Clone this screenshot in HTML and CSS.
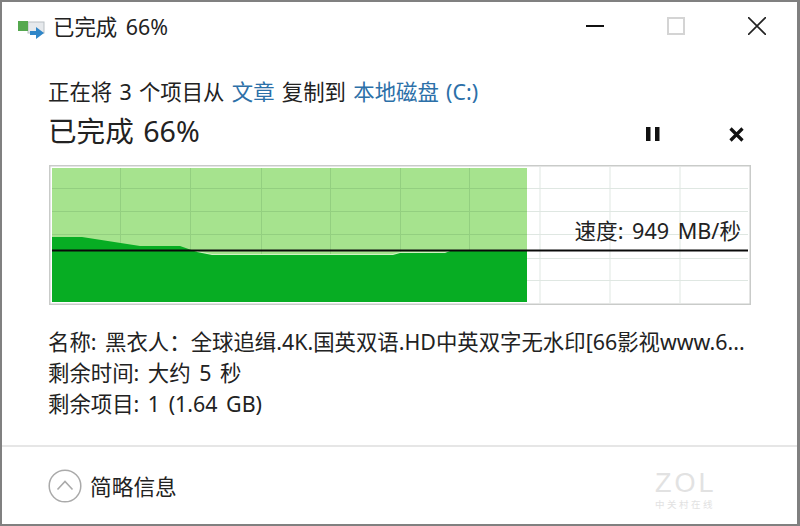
FILE: index.html
```html
<!DOCTYPE html>
<html>

<head>
    <meta charset="utf-8">
    <link rel="stylesheet" href="styles.css">
</head>

<body>
    <div class="window">
        <div class="titlebar">
            <svg class="app-icon" width="28" height="20" viewBox="0 0 28 20">
                <rect x="10" y="2" width="16" height="11" fill="#e6e9ec" stroke="#b9bfc4" />
                <rect x="0" y="1" width="10" height="10" fill="#55a84f" />
                <path d="M12 11h6V7l8 6-8 6v-4h-6z" fill="#2f86c8" />
            </svg>
            <span class="title">已完成 66%</span>
            <div class="controls">
                <svg width="18" height="18" viewBox="0 0 18 18" class="win-btn">
                    <path d="M0 9h18" stroke="#111" stroke-width="2" />
                </svg>
                <svg width="18" height="18" viewBox="0 0 18 18" class="win-btn">
                    <rect x="1" y="1" width="16" height="16" fill="none" stroke="#d4d4d4" stroke-width="2" />
                </svg>
                <svg width="18" height="18" viewBox="0 0 18 18" class="win-btn">
                    <path d="M0 0l18 18M18 0L0 18" stroke="#222" stroke-width="1.6" />
                </svg>
            </div>
        </div>

        <div class="main">
            <div class="copy-line">正在将 3 个项目从 <a>文章</a> 复制到 <a>本地磁盘 (C:)</a></div>
            <div class="heading-row">
                <span class="heading">已完成 66%</span>
                <div class="actions">
                    <svg width="14" height="14" viewBox="0 0 14 14">
                        <path d="M0 0h4.500v14H0zM9 0h4.500v14H9z" fill="#111" />
                    </svg>
                    <svg width="15" height="15" viewBox="0 0 15 15">
                        <path d="M1.500 1.500l12 12M13.500 1.500l-12 12" stroke="#111" stroke-width="3.200" />
                    </svg>
                </div>
            </div>

            <div class="graph">
                <svg width="702" height="140" viewBox="0 0 702 140">
                    <rect x="0.750" y="0.750" width="700.500" height="138.500" fill="#fff" stroke="#c9cbc9" stroke-width="1.500" />
                    <g stroke="#dfe7e2" stroke-width="1">
                        <path d="M491 2v136M561 2v136M631 2v136" />
                        <path d="M478 23.500h221M478 46.500h221M478 69.500h221M478 93.500h221M478 115.500h221" />
                    </g>
                    <rect x="3" y="3" width="475" height="134" fill="#a6e38e" />
                    <g stroke="#93cf80" stroke-width="1">
                        <path d="M71.500 3v134M141.500 3v134M212.500 3v134M281.500 3v134M351.500 3v134M420.500 3v134" />
                        <path d="M3 23.500h475M3 46.500h475M3 69.500h475" />
                    </g>
                    <path d="M148 87l15 3h181l7-2h45l5-2" fill="none" stroke="#d2f2c4" stroke-width="2" />
                    <path d="M3 72h30l58 9h40l17 6 15 3h181l7-2h45l5-2h77v51H3z" fill="#07ad23" />
                    <path d="M3 85.500h696" stroke="#0a0a0a" stroke-width="1.800" />
                </svg>
                <span class="speed">速度: 949 MB/秒</span>
            </div>

            <div class="details">
                <div>名称: 黑衣人：全球追缉.4K.国英双语.HD中英双字无水印[66影视www.6...</div>
                <div>剩余时间: 大约 5 秒</div>
                <div>剩余项目: 1 (1.64 GB)</div>
            </div>
        </div>

        <div class="footer">
            <svg width="34" height="34" viewBox="0 0 34 34">
                <circle cx="17" cy="17" r="15.800" fill="#fff" stroke="#aaa" stroke-width="1.500" />
                <path d="M9.500 20.500L17 12.500l7.500 8" fill="none" stroke="#aaa" stroke-width="1.600" />
            </svg>
            <span class="less">简略信息</span>
        </div>

        <div class="watermark">
            <div class="wm-big">ZOL</div>
            <div class="wm-small">中关村在线</div>
        </div>
    </div>
</body>

</html>
```

FILE: styles.css
```css
* {
    box-sizing: border-box;
}

html,
body {
    margin: 0;
    height: 100%;
}

body {
    font-family: "Noto Sans", "Noto Sans CJK SC", sans-serif;
    color: #222;
    background: #fff;
}

.window {
    position: relative;
    width: 800px;
    height: 526px;
    border: 2px solid #808080;
    border-right-width: 3px;
    background: #fff;
    display: flex;
    flex-direction: column;
}

.titlebar {
    height: 48px;
    display: flex;
    align-items: center;
    padding-left: 16px;
    padding-right: 31px;
}

.app-icon {
    margin-right: 7px;
    margin-top: 8px;
}

.title {
    font-size: 21.400px;
    line-height: 28px;
    word-spacing: 3px;
    position: relative;
    top: 1px;
}

.controls {
    margin-left: auto;
    display: flex;
    gap: 63px;
    align-items: center;
}

.win-btn {
    display: block;
}

.main {
    flex: 1;
    padding: 0 47px 0 46px;
    display: flex;
    flex-direction: column;
}

.copy-line {
    margin-top: 28px;
    font-size: 21.400px;
    line-height: 28px;
    word-spacing: 1.700px;
    white-space: nowrap;
}

.copy-line a {
    color: #2c70a8;
}

.heading-row {
    display: flex;
    align-items: center;
    height: 36px;
    margin-top: 7px;
}

.heading {
    font-size: 28.600px;
    line-height: 36px;
    word-spacing: 2px;
}

.actions {
    margin-left: auto;
    display: flex;
    align-items: center;
    gap: 69px;
    padding-right: 6px;
    padding-top: 6px;
}

.actions svg {
    display: block;
}

.graph {
    position: relative;
    width: 702px;
    height: 140px;
    margin-top: 16px;
    margin-left: 1px;
}

.graph svg {
    display: block;
}

.speed {
    position: absolute;
    right: 10px;
    top: 52px;
    font-size: 21.600px;
    line-height: 28px;
    word-spacing: 3px;
}

.details {
    margin-top: 21px;
    font-size: 21.400px;
    line-height: 31px;
    word-spacing: 3px;
    white-space: nowrap;
}

.footer {
    height: 79px;
    border-top: 2px solid #e6e6e6;
    display: flex;
    align-items: center;
    padding-left: 46px;
    gap: 8px;
}

.footer svg {
    display: block;
}

.less {
    font-size: 21.700px;
}

.watermark {
    position: absolute;
    left: 653px;
    top: 466px;
    width: 60px;
    text-align: center;
    color: #e2e2e2;
}

.wm-big {
    font-family: "Liberation Sans", sans-serif;
    font-size: 27px;
    line-height: 30px;
    letter-spacing: 3px;
}

.wm-small {
    font-size: 9.500px;
    line-height: 14px;
    letter-spacing: 2.500px;
    white-space: nowrap;
}
```
